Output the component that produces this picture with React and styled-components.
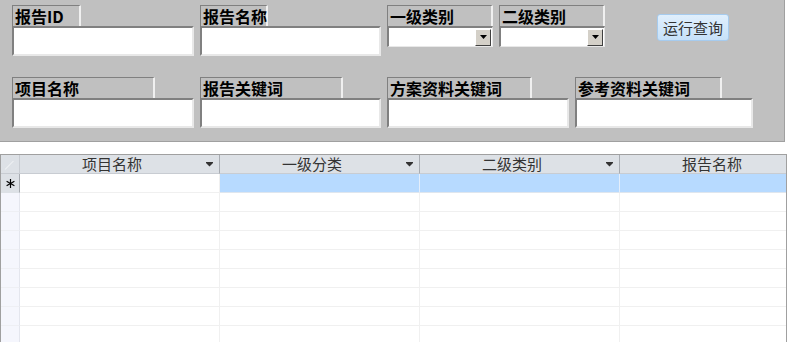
import React from "react";
import styled, { createGlobalStyle } from "styled-components";

const GlobalStyle = createGlobalStyle`
  html, body {
    margin: 0;
    padding: 0;
    overflow: hidden;
    background: #ffffff;
  }
  body {
    font-family: "Noto Sans CJK SC", "DejaVu Sans", sans-serif;
  }
`;

const topRow = [
    { label: "报告ID", labelWidth: 69, width: 182, kind: "text" },
    { label: "报告名称", labelWidth: 68, width: 181, kind: "text" },
    { label: "一级类别", labelWidth: 106, width: 106, kind: "combo" },
    { label: "二级类别", labelWidth: 106, width: 106, kind: "combo" },
];

const bottomRow = [
    { label: "项目名称", labelWidth: 143, width: 182 },
    { label: "报告关键词", labelWidth: 143, width: 181 },
    { label: "方案资料关键词", labelWidth: 145, width: 182 },
    { label: "参考资料关键词", labelWidth: 147, width: 178 },
];

const columns = [
    { title: "项目名称", filter: true },
    { title: "一级分类", filter: true },
    { title: "二级类别", filter: true },
    { title: "报告名称", filter: false },
];

const ArrowIcon = () => (
    <svg width="7" height="5" viewBox="0 0 7 5">
        <rect x="0" y="0" width="7" height="1" fill="#333" />
        <path d="M0 1 H7 L3.5 4.5 Z" fill="#333" />
    </svg>
);

const NewRowIcon = () => (
    <svg width="9" height="9" viewBox="0 0 9 9">
        <g stroke="#000" strokeWidth="1.2">
            <line x1="4.5" y1="0" x2="4.5" y2="9" />
            <line x1="0.6" y1="2.2" x2="8.4" y2="6.8" />
            <line x1="0.6" y1="6.8" x2="8.4" y2="2.2" />
        </g>
    </svg>
);

export default function App() {
    return (
        <>
            <GlobalStyle />
            <Panel>
                <FieldRow>
                    {topRow.map((f) => (
                        <Field key={f.label} width={f.width}>
                            <Label width={f.labelWidth}>{f.label}</Label>
                            {f.kind === "combo" ? (
                                <Combo>
                                    <DropButton>
                                        <svg width="7" height="4" viewBox="0 0 7 4">
                                            <path d="M0 0 H7 L3.5 4 Z" fill="#000" />
                                        </svg>
                                    </DropButton>
                                </Combo>
                            ) : (
                                <TextBox />
                            )}
                        </Field>
                    ))}
                    <RunButton>运行查询</RunButton>
                </FieldRow>
                <FieldRow>
                    {bottomRow.map((f) => (
                        <Field key={f.label} width={f.width}>
                            <Label width={f.labelWidth}>{f.label}</Label>
                            <TextBox />
                        </Field>
                    ))}
                </FieldRow>
            </Panel>

            <Sheet>
                <Row>
                    <Corner />
                    {columns.map((c) => (
                        <HeadCell key={c.title}>
                            <span>{c.title}</span>
                            {c.filter && (
                                <FilterArrow>
                                    <ArrowIcon />
                                </FilterArrow>
                            )}
                        </HeadCell>
                    ))}
                </Row>
                <Row>
                    <Selector active>
                        <NewRowIcon />
                    </Selector>
                    <Cell />
                    <Cell selected />
                    <Cell selected />
                    <Cell selected />
                </Row>
                {Array.from({ length: 9 }).map((_, i) => (
                    <Row key={i}>
                        <Selector />
                        <Cell />
                        <Cell />
                        <Cell />
                        <Cell />
                    </Row>
                ))}
            </Sheet>
        </>
    );
}

const Panel = styled.div`
  width: 785px;
  height: 142px;
  box-sizing: border-box;
  background: #c0c0c0;
  border-right: 1px solid #a0a0a0;
  border-bottom: 1px solid #a0a0a0;
  padding: 5px 0 0 12px;
  display: flex;
  flex-direction: column;
  gap: 21px;
`;

const FieldRow = styled.div`
  display: flex;
  align-items: flex-start;
  gap: 6px;
`;

const Field = styled.div`
  width: ${(p) => p.width}px;
  display: flex;
  flex-direction: column;
`;

const Label = styled.div`
  width: ${(p) => p.width}px;
  height: 21px;
  box-sizing: border-box;
  border-top: 1px solid #808080;
  border-left: 1px solid #808080;
  border-right: 2px solid #f0f0f0;
  padding-left: 2px;
  font-size: 16px;
  font-weight: 700;
  line-height: 21px;
  color: #000;
  white-space: nowrap;
`;

const TextBox = styled.div`
  height: 30px;
  box-sizing: border-box;
  background: #ffffff;
  border-top: 2px solid #808080;
  border-left: 2px solid #808080;
  border-right: 2px solid #e8e8e8;
  border-bottom: 2px solid #e8e8e8;
`;

const Combo = styled.div`
  height: 21px;
  box-sizing: border-box;
  background: #ffffff;
  border-top: 2px solid #808080;
  border-left: 2px solid #808080;
  border-right: 1px solid #e8e8e8;
  border-bottom: 1px solid #e8e8e8;
  display: flex;
  justify-content: flex-end;
  align-items: center;
  padding-right: 1px;
`;

const DropButton = styled.div`
  width: 16px;
  height: 17px;
  box-sizing: border-box;
  background: #d4d0c8;
  border-top: 1px solid #ffffff;
  border-left: 1px solid #ffffff;
  border-right: 1px solid #404040;
  border-bottom: 1px solid #404040;
  display: flex;
  align-items: center;
  justify-content: center;
`;

const RunButton = styled.div`
  margin: 9px 0 0 46px;
  width: 72px;
  height: 27px;
  box-sizing: border-box;
  border: 1px solid #a6cbee;
  border-radius: 3px;
  background: linear-gradient(#e0effd, #c6e1f9);
  color: #333;
  font-size: 15px;
  line-height: 25px;
  text-align: center;
`;

const Sheet = styled.div`
  margin-top: 12px;
  width: 787px;
  height: 188px;
  overflow: hidden;
  box-sizing: border-box;
  border-top: 1px solid #a0a0a0;
  border-left: 1px solid #a0a0a0;
  border-right: 1px solid #a0a0a0;
`;

const Row = styled.div`
  display: grid;
  grid-template-columns: 19px 200px 200px 200px 200px;
  height: 19px;
`;

const Corner = styled.div`
  position: relative;
  background: #dde1e6;
  border-right: 1px solid #c8ccd2;
  border-bottom: 1px solid #c8ccd2;
  &::after {
    content: "";
    position: absolute;
    left: 4px;
    bottom: 3px;
    width: 12px;
    height: 1px;
    background: #f0f2f5;
    transform: rotate(-45deg);
    transform-origin: left center;
  }
`;

const HeadCell = styled.div`
  position: relative;
  background: #dde1e6;
  border-right: 1px solid #a8acb2;
  border-bottom: 1px solid #c8ccd2;
  padding-right: 15px;
  font-size: 15px;
  line-height: 18px;
  color: #333;
  text-align: center;
`;

const FilterArrow = styled.span`
  position: absolute;
  right: 6px;
  top: 7px;
  display: flex;
`;

const Selector = styled.div`
  background: ${(p) => (p.active ? "#dde1e6" : "#f5f6fd")};
  border-right: 1px solid ${(p) => (p.active ? "#a8acb2" : "#e4e6ee")};
  border-bottom: 1px solid ${(p) => (p.active ? "#dde1e6" : "#eeeff4")};
  display: flex;
  align-items: center;
  justify-content: center;
`;

const Cell = styled.div`
  background: ${(p) => (p.selected ? "#b7daff" : "#ffffff")};
  border-right: 1px solid ${(p) => (p.selected ? "#e4eefb" : "#f0f0f0")};
  border-bottom: 1px solid ${(p) => (p.selected ? "#dfe6ee" : "#f0f0f0")};
`;
